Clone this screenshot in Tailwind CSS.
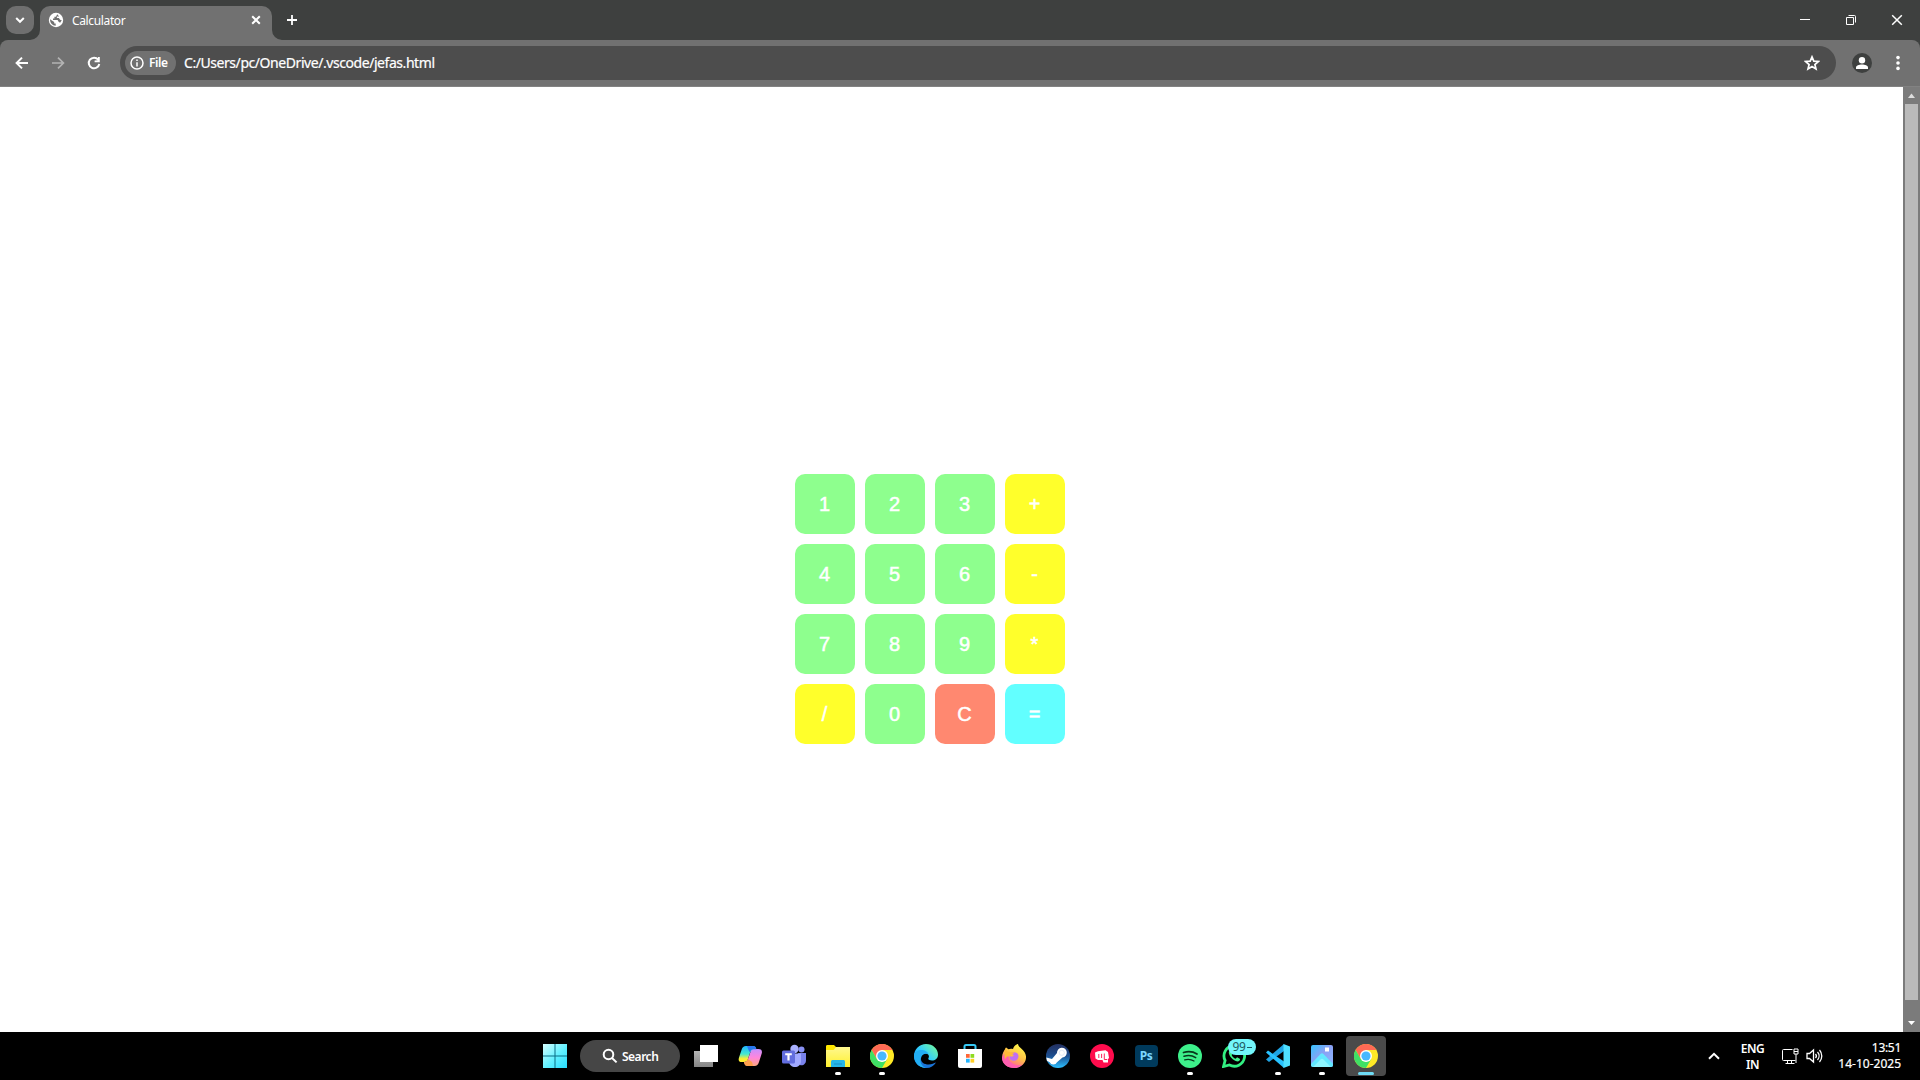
<!DOCTYPE html>
<html lang="en">
<head>
<meta charset="utf-8">
<title>Calculator</title>
<script src="https://cdn.jsdelivr.net/npm/@tailwindcss/browser@4"></script>
</head>
<body class="w-[1920px] h-[1080px] overflow-hidden flex flex-col bg-white text-white font-['Noto_Sans',sans-serif]">

<svg class="absolute size-0" aria-hidden="true">
  <defs>
    <linearGradient id="win" x1="0" y1="0" x2="1" y2="1"><stop offset="0" stop-color="#d4ffff"/><stop offset=".55" stop-color="#5ff0ff"/><stop offset="1" stop-color="#28dcff"/></linearGradient>
    <linearGradient id="gray" x1="0" y1="0" x2="0" y2="1"><stop offset="0" stop-color="#b5b5b5"/><stop offset="1" stop-color="#858585"/></linearGradient>
    <linearGradient id="cpA" x1="0" y1="0" x2="0" y2="1"><stop offset="0" stop-color="#20b4ff"/><stop offset=".5" stop-color="#45e8d0"/><stop offset=".8" stop-color="#ffee30"/></linearGradient>
    <linearGradient id="cpB" x1="0" y1="0" x2="0" y2="1"><stop offset="0" stop-color="#c890ff"/><stop offset=".5" stop-color="#ff86dc"/><stop offset="1" stop-color="#ffa880"/></linearGradient>
    <linearGradient id="folder" x1="0" y1="0" x2="0" y2="1"><stop offset="0" stop-color="#fff890"/><stop offset="1" stop-color="#fff02e"/></linearGradient>
    <linearGradient id="edgeA" x1="0" y1="1" x2="1" y2="0"><stop offset="0" stop-color="#1477ef"/><stop offset=".5" stop-color="#30ccff"/><stop offset="1" stop-color="#7dff90"/></linearGradient>
    <linearGradient id="fx" x1=".8" y1="0" x2=".3" y2="1"><stop offset="0" stop-color="#fffc4a"/><stop offset=".5" stop-color="#ffc048"/><stop offset="1" stop-color="#ff4ca8"/></linearGradient>
    <linearGradient id="steam" x1="0" y1="0" x2="0" y2="1"><stop offset="0" stop-color="#232f60"/><stop offset=".5" stop-color="#1d4f90"/><stop offset="1" stop-color="#2cc0ff"/></linearGradient>
    <linearGradient id="photo" x1="0" y1="0" x2="1" y2="1"><stop offset="0" stop-color="#35c4ff"/><stop offset=".45" stop-color="#8aa0f4"/><stop offset="1" stop-color="#8ab8ff"/></linearGradient>
    <symbol id="chrome" viewBox="0 0 24 24">
      <circle cx="12" cy="12" r="12" fill="#ffe926"/>
      <path d="M1.600 6A12 12 0 0 1 22.400 6H12L6.800 15Z" fill="#ff6a55"/>
      <path d="M1.600 6A12 12 0 0 0 12 24L17.200 15 12 18 6.800 15Z" fill="#3fe065"/>
      <circle cx="12" cy="12" r="6" fill="#fff"/><circle cx="12" cy="12" r="4.600" fill="#48b8ff"/>
    </symbol>
  </defs>
</svg>

<header class="h-10 shrink-0 flex bg-[#3e403f]">
  <div class="flex w-10 items-start pl-1.5 pt-1.5">
    <button class="size-7 rounded-[10px] bg-[#6f6f6f] flex items-center justify-center">
      <svg class="size-3" viewBox="0 0 12 12" fill="none" stroke="#fff" stroke-width="2"><path d="M2.200 4 6 7.800 9.800 4"/></svg>
    </button>
  </div>
  <div class="relative mt-1.5 w-[232px] h-[34px] rounded-t-[10px] bg-[#717171] flex items-center pl-2 pr-2.5 pb-1.5">
    <svg class="absolute -left-2.5 bottom-0 size-2.5" viewBox="0 0 10 10"><path d="M10 0V10H0A10 10 0 0 0 10 0Z" fill="#717171"/></svg>
    <svg class="absolute -right-2.5 bottom-0 size-2.5" viewBox="0 0 10 10"><path d="M0 0V10H10A10 10 0 0 1 0 0Z" fill="#717171"/></svg>
    <svg class="size-4 shrink-0" viewBox="0 0 16 16"><circle cx="8" cy="8" r="7.200" fill="#fff"/><path d="M2 7.300 6.200 10v1.400h1.500v2.400C4.300 13.600 2 11 2 7.300ZM9.200 2.300 8 4.700H6.400v1.700H5v1.500h4.600l1 1.800 1.500 1.100 1.700-2.500-1.700-.6-1.200-1.800h-2V4.600h2.200Z" fill="#717171"/></svg>
    <span class="ml-2 pt-0.5 text-[12px] tracking-[-0.360px] leading-4">Calculator</span>
    <svg class="ml-auto size-3" viewBox="0 0 12 12" stroke="#fff" stroke-width="2"><path d="m2.200 2.200 7.600 7.600m0-7.600L2.200 9.800"/></svg>
  </div>
  <svg class="ml-3.5 mt-3.5 size-3" viewBox="0 0 12 12" stroke="#fff" stroke-width="1.800"><path d="M1 6h10M6 1v10"/></svg>
  <div class="ml-auto flex h-10 items-center">
    <div class="w-[46px] flex justify-center"><svg class="size-3" viewBox="0 0 12 12"><path d="M1 5h10v1H1Z" fill="#fff"/></svg></div>
    <div class="w-[46px] flex justify-center"><svg class="size-3" viewBox="0 0 12 12" fill="none" stroke="#fff"><path d="M1.500 3.500h7v7h-7ZM3.500 1.500h6a1 1 0 0 1 1 1v6"/></svg></div>
    <div class="w-[46px] flex justify-center"><svg class="size-3" viewBox="0 0 12 12" stroke="#fff" stroke-width="1.500"><path d="m1.200 1.200 9.600 9.600m0-9.600-9.600 9.600"/></svg></div>
  </div>
</header>

<div class="h-[47px] shrink-0 bg-[#3e403f]">
<nav class="h-full rounded-t-[8px] bg-[#717171] border-b border-[#828282] flex items-center">
  <div class="flex gap-5 pl-3.5 w-[120px]">
    <svg class="size-4" viewBox="0 0 16 16" fill="none" stroke="#fff" stroke-width="2"><path d="M14 8H3M8 2.600 2.600 8 8 13.400"/></svg>
    <svg class="size-4" viewBox="0 0 16 16" fill="none" stroke="#b3b3b3" stroke-width="1.700"><path d="M2 8h11M8 2.600 13.400 8 8 13.400"/></svg>
    <svg class="size-4" viewBox="0 0 16 16" fill="none" stroke="#fff" stroke-width="2"><path d="M12.200 4.600A5.300 5.300 0 1 0 13.300 9"/><path d="M13.800 2v5.200H8.600V5.600l3-.4L12 2Z" fill="#fff" stroke="none"/></svg>
  </div>
  <div class="w-[1716px] h-[34px] rounded-full bg-[#4d4d4d] flex items-center pl-[5px] pr-4">
    <div class="w-[51px] h-6 rounded-full bg-[#717171] flex items-center pl-[5px]">
      <svg class="size-3.5" viewBox="0 0 14 14" fill="none" stroke="#fff" stroke-width="1.500"><circle cx="7" cy="7" r="6"/><path d="M7 6.200v4.200M7 3.400v1.500"/></svg>
      <span class="ml-[5px] text-[12px] font-semibold tracking-[-0.400px] leading-4">File</span>
    </div>
    <span class="ml-2 text-[14px] tracking-[-0.440px] leading-5 whitespace-nowrap [-webkit-text-stroke:0.200px_white]">C:/Users/pc/OneDrive/.vscode/jefas.html</span>
    <svg class="ml-auto size-4" viewBox="0 0 16 16" fill="none" stroke="#fff" stroke-width="1.700"><path d="m8 1.900 1.800 4.200 4.700.4-3.600 3 1.100 4.500L8 11.600 4 14l1.100-4.500-3.600-3 4.700-.4Z"/></svg>
  </div>
  <svg class="ml-4 size-5" viewBox="0 0 20 20"><circle cx="10" cy="10" r="10" fill="#3e403f"/><circle cx="10" cy="7.200" r="3.200" fill="#fff"/><path d="M4 16v-1.600c0-2 3-3 6-3s6 1 6 3V16Z" fill="#fff"/></svg>
  <svg class="ml-[18px] size-4" viewBox="0 0 16 16" fill="#fff"><circle cx="8" cy="2.600" r="1.800"/><circle cx="8" cy="8" r="1.800"/><circle cx="8" cy="13.400" r="1.800"/></svg>
</nav>
</div>

<div class="h-[945px] shrink-0 flex bg-white">
  <main class="w-[1903px] pl-[795px] pt-[387px] font-['Liberation_Sans',Arial,sans-serif] text-[20px] leading-none">
    <div class="grid w-[270px] grid-cols-4 auto-rows-[60px] gap-2.5 [-webkit-text-stroke:0.500px_white] *:pr-px *:rounded-[10px]">
      <button class="bg-[#8eff8e]">1</button><button class="bg-[#8eff8e]">2</button><button class="bg-[#8eff8e]">3</button><button class="bg-[#ffff2b]">+</button>
      <button class="bg-[#8eff8e]">4</button><button class="bg-[#8eff8e]">5</button><button class="bg-[#8eff8e]">6</button><button class="bg-[#ffff2b]">-</button>
      <button class="bg-[#8eff8e]">7</button><button class="bg-[#8eff8e]">8</button><button class="bg-[#8eff8e]">9</button><button class="bg-[#ffff2b]">*</button>
      <button class="bg-[#ffff2b]">/</button><button class="bg-[#8eff8e]">0</button><button class="bg-[#ff8870]">C</button><button class="bg-[#62ffff]">=</button>
    </div>
  </main>
  <div class="w-[17px] bg-[#7b7b7b] flex flex-col items-center">
    <svg class="h-[17px] w-[17px] shrink-0" viewBox="0 0 17 17"><path d="M5 11 8.500 6.500 12 11Z" fill="#ddd"/></svg>
    <div class="w-[13px] h-[896px] bg-[#bababa]"></div>
    <svg class="mt-[15px] h-[17px] w-[17px] shrink-0" viewBox="0 0 17 17"><path d="M5 6 8.500 10 12 6Z" fill="#fff"/></svg>
  </div>
</div>

<footer class="h-12 shrink-0 bg-black flex items-center">
  <div class="ml-[533px] w-11 flex justify-center"><svg class="size-6" viewBox="0 0 24 24" fill="url(#win)"><path d="M0 0h24v24H0Z"/><path d="M11.500 0h1v24h-1ZM0 11.500h24v1H0Z" fill="#0b6f86"/></svg></div>
  <div class="ml-[3px] mr-1 w-[100px] h-8 rounded-full bg-[#464646] flex items-center pl-[22px]">
    <svg class="size-4" viewBox="0 0 16 16" fill="none" stroke="#fff" stroke-width="2"><circle cx="6.500" cy="6.500" r="4.800"/><path d="m10 10 4.600 4.400"/></svg>
    <span class="ml-1 pt-0.5 text-[12px] font-semibold tracking-[-0.500px] leading-4">Search</span>
  </div>
  <div class="w-11 flex justify-center"><svg class="w-[26px] h-6" viewBox="0 0 26 24"><path d="M1 7h19v16H1Z" fill="url(#gray)"/><path d="M7 1h18v17H7Z" fill="#fff"/></svg></div>
  <div class="w-11 flex justify-center"><svg class="size-6" viewBox="0 0 24 24"><path d="M8 2h7c2 0 2.800 1.200 3.400 3.200L19 7h-4.500c-1.500 0-2.200 1-2.700 2.600L10 15c-.8 2.300-2 3-3.800 3H3.500C.8 18 .2 16 1 13.500L3.500 6C4.500 3 5.500 2 8 2Z" fill="url(#cpA)"/><path d="M16.500 22H10c-2.500 0-3.200-1-3.800-3.200L6 18c2.500 0 3.300-1.200 4-3l2.500-7c.7-2 2-3 4-3h4c3 0 4 2 3.200 4.500L21 18c-.8 2.700-2 4-4.500 4Z" fill="url(#cpB)"/><path d="M9 2h6c2 0 2.800 1.200 3.400 3.200h-3C13 5.200 12.500 7 12 8.500L10.500 6Z" fill="#2977ef"/><path d="M6 18c2.500 0 3.300-1.200 4-3l4 3 1 4h-5c-2.500 0-3.400-1-4-4Z" fill="#ffa04c"/></svg></div>
  <div class="w-11 flex justify-center"><svg class="w-[26px] h-6" viewBox="0 0 26 24"><circle cx="20.500" cy="5.500" r="3" fill="#8a92f5"/><path d="M17 9h8v7c0 4-3 6-6 5Z" fill="#7982ec"/><circle cx="13.500" cy="5" r="4.200" fill="#a9b0ff"/><path d="M8 9.500h12V17c0 8-12 8-12 0Z" fill="#a1a9ff"/><rect x="1" y="6.500" width="13" height="13" rx="1.500" fill="#626dde"/><path d="M4.200 9.200h6.600v2H8.600v5.300H6.400v-5.300H4.200Z" fill="#fff"/></svg></div>
  <div class="relative w-11 h-12 flex items-center justify-center"><svg class="size-6" viewBox="0 0 24 24"><path d="M0 2.500C0 1.500.5 1 1.500 1H8l2.500 2.500L8 6H0Z" fill="#ffe800"/><path d="M0 6h7.500L10 3h14v20H0Z" fill="url(#folder)"/><path d="M5 23v-5c0-1.500.7-2 2-2h10c1.500 0 2 .5 2 2v5Z" fill="#26b6e8"/><path d="M8 19.500h8v1H8Z" fill="#1690c8"/></svg><i class="absolute bottom-[5px] w-1.5 h-[3px] rounded-full bg-white"></i></div>
  <div class="relative w-11 h-12 flex items-center justify-center"><svg class="size-6"><use href="#chrome"/></svg><i class="absolute bottom-[5px] w-1.5 h-[3px] rounded-full bg-white"></i></div>
  <div class="w-11 flex justify-center"><svg class="size-6" viewBox="0 0 24 24"><path d="M0 12C0 5 5.500 0 12 0c7 0 12 5 12 10.500 0 4-3 6-6 6-2.500 0-4.500-1-3.500-2.500.8-1.200.7-4.500-3-4.500-4.500 0-6 5-4.500 9C8.500 22 13 24 13 24 6 24.500 0 19 0 12Z" fill="url(#edgeA)"/><path d="M0 11C1 7 5 5.500 8.500 6c3 .3 5.500 2 6 4.500C13 9 8 9 7 14c-.8 4.500 2 8.500 6 10C5 24.500-.5 18 0 11Z" fill="#22aef4"/><path d="M7 14c-.5 4.500 3.500 6.500 7.500 6.500 3.500 0 5.500-1.500 7.500-2-2 3.500-5.500 5.500-9.500 5.500C8 23 5.500 18.500 7 14Z" fill="#1a74d8"/></svg></div>
  <div class="w-11 flex justify-center"><svg class="size-6" viewBox="0 0 24 24"><path d="M6.500 6V2.500c0-1 .5-1.500 1.500-1.500h8c1 0 1.500.5 1.500 1.500V6" fill="none" stroke="#36c8f4" stroke-width="2"/><path d="M0 5h24v17a2 2 0 0 1-2 2H2a2 2 0 0 1-2-2Z" fill="#fff"/><path d="M8 10h3.700v3.800H8Z" fill="#ff6738"/><path d="M12.500 10h3.700v3.800h-3.700Z" fill="#8edb20"/><path d="M8 14.800h3.700v3.800H8Z" fill="#25b6ff"/><path d="M12.500 14.800h3.700v3.800h-3.700Z" fill="#ffcf25"/></svg></div>
  <div class="w-11 flex justify-center"><svg class="size-6" viewBox="0 0 24 24"><path d="M4 3.500c.7 0 1.500 1.200 2.500 1.700 1.500-.7 3-.7 4.500-.2C11.500 3 13 .8 16 0c.2 2 1.500 3 3.500 4.700C22.500 7.300 24.300 10 24 14 23.500 20 18 24 12 24S0 20 0 13.500C0 9.500 2 7 4 3.500Z" fill="url(#fx)"/><path d="M0 13.500C0 20 6 24 12 24c3 0 6-1 8-3-7 1.500-13-2-13.500-8L4 8Z" fill="#ff5fb0"/><path d="M8.500 9.500c3-2.500 8-1.500 8 2.800 0 3-2.500 4.500-4.800 4.500-3 0-4.700-2-3.900-4.500 2 1 3.200.2 4-1Z" fill="#c070f4"/><path d="M4 3.500c0 3 1 4.500 5 4.700l3.500.3c-1 1.800-3 1.600-3.500 3.300-3-.3-5 1.200-6 3.700C2 12 2 7 4 3.500Z" fill="#ffba38"/></svg></div>
  <div class="w-11 flex justify-center"><svg class="size-6" viewBox="0 0 24 24"><circle cx="12" cy="12" r="12" fill="url(#steam)"/><path d="M.3 13.500 6 15l5-6A4.900 4.900 0 1 1 16.500 13.500L11 18.200a4 4 0 0 1-7.300 0L.9 16.800Z" fill="#fff"/><circle cx="15.800" cy="8.800" r="2.600" fill="none" stroke="#dce6f5" stroke-width=".8"/></svg></div>
  <div class="w-11 flex justify-center"><svg class="size-6" viewBox="0 0 24 24"><circle cx="12" cy="12" r="12" fill="#ff0c4d"/><path d="M5 8.500 8 7.200l7.500-1L18 8l1 6-1 1v3.500h-4.500L12.500 16H8l-2.500-1.500Z" fill="#fff"/><path d="M8.800 10v4M11.600 9.800V14m2.700-4.500v6h3" fill="none" stroke="#ff0c4d" stroke-width=".9"/></svg></div>
  <div class="w-11 flex justify-center"><div class="w-[23px] h-[22px] rounded bg-[#003a5c] flex items-center justify-center text-[12px] tracking-[-0.500px] leading-none font-bold text-[#7cd6ff]">Ps</div></div>
  <div class="relative w-11 h-12 flex items-center justify-center"><svg class="size-6" viewBox="0 0 24 24" fill="none" stroke="#07351a" stroke-linecap="round"><circle cx="12" cy="12" r="12" fill="#3df08a" stroke="none"/><path d="M5.500 8.500c5-1.500 9.500-1 13.500 1.500" stroke-width="1.800"/><path d="M6 12.300c4.200-1.200 8.400-.7 11.700 1.300" stroke-width="1.500"/><path d="M6.700 15.800c3.500-.9 6.700-.4 9.300 1.200" stroke-width="1.300"/></svg><i class="absolute bottom-[5px] w-1.5 h-[3px] rounded-full bg-white"></i></div>
  <div class="relative w-11 h-12 flex items-center justify-center"><svg class="size-6" viewBox="0 0 24 24"><path d="m1.500 22.500 1.600-6A10.300 10.300 0 1 1 7.500 21Z" fill="#000" stroke="#32f082" stroke-width="2.800"/><path d="M8.300 6.200c-1.400.6-1.800 2-1.300 3.600 1 3.300 4 6.500 7.500 7.500 2 .5 3.500-.5 3.600-2.400l-3-1.600-1.500 1.500c-1.800-.6-3.300-2.200-4-3.800l1.200-1.500L9.500 6.200Z" fill="#3df58c"/></svg><span class="absolute left-4 top-[7px] w-7 h-4 rounded-full bg-[#73f6fb] flex items-center justify-center gap-px text-[12px] tracking-[-0.300px] leading-4 text-[#1f5a60]">99<i class="w-[5px] h-px bg-[#1f5a60]"></i></span></div>
  <div class="relative w-11 h-12 flex items-center justify-center"><svg class="size-6" viewBox="0 0 24 24"><path d="M0 15.500 18 0v7L3 18Z" fill="#1fa4e4"/><path d="M0 8.500 2 6.500 18 17.500V24Z" fill="#28c2ff"/><path d="M17.500 0 24 2.500v19L17.500 24Z" fill="#4fe0ff"/></svg><i class="absolute bottom-[5px] w-1.5 h-[3px] rounded-full bg-white"></i></div>
  <div class="relative w-11 h-12 flex items-center justify-center"><svg class="size-6" viewBox="0 0 24 24"><rect x="1" y="1" width="22" height="22" rx="2" fill="url(#photo)"/><path d="m1 20 9.500-10c1-1 2-1 3 0L23 20v1a2 2 0 0 1-2 2H3a2 2 0 0 1-2-2Z" fill="#62e8ff"/><path d="m3 22.900 7.500-7.400c1-1 2-1 3 0l7.500 7.400Z" fill="#8ef6ff"/><path d="M15 3.500h4v4h-4Z" fill="#fff"/></svg><i class="absolute bottom-[5px] w-1.5 h-[3px] rounded-full bg-white"></i></div>
  <div class="relative w-11 h-12 flex items-center justify-center"><div class="size-10 rounded bg-[#4a4a4a] flex items-center justify-center"><svg class="size-6"><use href="#chrome"/></svg></div><i class="absolute bottom-[5px] w-4 h-[3px] rounded-full bg-[#6fdcf5]"></i></div>

  <div class="ml-auto flex items-center h-12 pr-[19px]">
    <svg class="w-3 h-2" viewBox="0 0 12 8" fill="none" stroke="#fff" stroke-width="2"><path d="m1 6.800 5-5 5 5"/></svg>
    <div class="ml-[19px] mt-px w-[27px] text-center text-[12px] font-semibold leading-4 tracking-[-0.500px]">ENG<br>IN</div>
    <svg class="ml-4 w-[17px] h-[17px]" viewBox="0 0 17 17" fill="none" stroke="#fff"><path d="M10.500 1.500h-9a1 1 0 0 0-1 1v9a1 1 0 0 0 1 1h12M5.500 12.500v3m4-3v3M3.500 15.500h9"/><path d="M12 1h4v5h-4ZM12 3.500h4M14 6v9"/></svg>
    <svg class="ml-[7px] w-[18px] h-4" viewBox="0 0 18 16" fill="none" stroke="#fff" stroke-width="1.300"><path d="M1 5.500h2.500L7.500 2v12L3.500 10.500H1ZM9.500 6a3 3 0 0 1 0 4M11.500 4a6 6 0 0 1 0 8M13.500 2a9 9 0 0 1 0 12"/></svg>
    <div class="ml-3.5 w-[63px] text-right text-[12px] leading-4 whitespace-nowrap [-webkit-text-stroke:0.200px_white]"><span class="tracking-[-0.300px]">13:51</span><br>14-10-2025</div>
  </div>
</footer>
</body>
</html>
